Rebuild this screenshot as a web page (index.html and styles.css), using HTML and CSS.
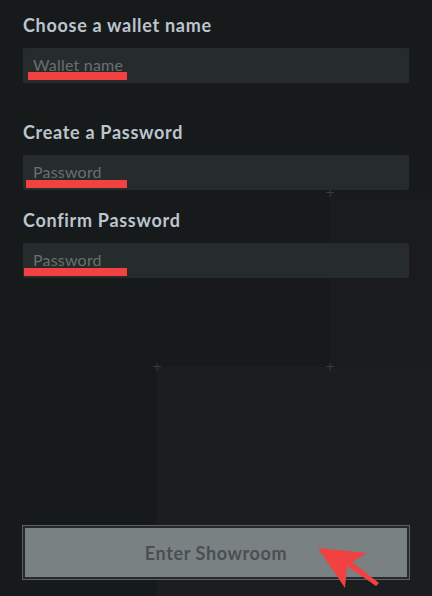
FILE: index.html
```html
<!DOCTYPE html>
<html lang="en">
<head>
    <meta charset="UTF-8">
    <meta name="viewport" content="width=device-width, initial-scale=1.0">
    <title>Create Wallet</title>
    <link rel="stylesheet" href="styles.css">
</head>
<body>

    <div class="backdrop">
        <div class="tile tile-square"></div>
        <div class="tile tile-side"></div>
        <div class="tile tile-bottom"></div>
        <span class="plus plus-tr">+</span>
        <span class="plus plus-bl">+</span>
        <span class="plus plus-br">+</span>
    </div>

    <div class="page">
        <form class="wallet-form" onsubmit="return false">
            <label class="label" for="name">Choose a wallet name</label>
            <div class="field">
                <input type="text" id="name" class="input" placeholder="Wallet name">
                <span class="mark mark-1"></span>
            </div>

            <label class="label label-gap" for="pass">Create a Password</label>
            <div class="field">
                <input type="password" id="pass" class="input" placeholder="Password">
                <span class="mark mark-2"></span>
            </div>

            <label class="label label-near" for="confirm">Confirm Password</label>
            <div class="field">
                <input type="password" id="confirm" class="input" placeholder="Password">
                <span class="mark mark-3"></span>
            </div>
        </form>

        <div class="footer">
            <button class="enter">Enter Showroom</button>
            <svg class="pointer" width="70" height="50" viewBox="0 0 70 50">
                <polygon points="2,3 51,8 36,17 63,38 60,41 31,21 29,43" fill="#f24141"/>
            </svg>
        </div>
    </div>

</body>
</html>
```

FILE: styles.css
```css
* {
    box-sizing: border-box;
}
html, body {
    margin: 0;
    height: 100%;
}
body {
    font-family: Lato, "Open Sans", sans-serif;
    background-color: #171a1b;
    position: relative;
    overflow: hidden;
}

/* faint grid tiles behind the form */
.backdrop {
    position: absolute;
    inset: 0;
    z-index: 0;
}
.tile {
    position: absolute;
}
.tile-square {
    left: 157px;
    top: 193px;
    width: 173px;
    height: 174px;
    background: #18191d;
}
.tile-side {
    left: 330px;
    top: 193px;
    right: 0;
    height: 174px;
    background: #1a1b1d;
}
.tile-bottom {
    left: 157px;
    top: 367px;
    right: 0;
    bottom: 0;
    background: #1c1d1f;
}
.plus {
    position: absolute;
    width: 10px;
    height: 10px;
    margin: -5px 0 0 -5px;
    color: #3a3c40;
    font-size: 12px;
    line-height: 10px;
    text-align: center;
    font-family: "DejaVu Sans", sans-serif;
}
.plus-tr { left: 330px; top: 193px; }
.plus-bl { left: 157px; top: 367px; }
.plus-br { left: 330px; top: 367px; }

.page {
    position: relative;
    z-index: 1;
    height: 100%;
    padding: 15px 23px 0;
    display: flex;
    flex-direction: column;
}
.wallet-form {
    display: flex;
    flex-direction: column;
}
.label {
    display: block;
    font-size: 18px;
    font-weight: bold;
    line-height: 20px;
    color: #bcc5cd;
    margin-bottom: 13px;
    letter-spacing: 0.7px;
}
.label-gap {
    margin-top: 39px;
}
.label-near {
    margin-top: 20px;
}
.field {
    position: relative;
    width: 386px;
}
.input {
    display: block;
    width: 100%;
    height: 35px;
    border: none;
    border-radius: 2px;
    background: #262c2c;
    padding: 0 10px 3px;
    font-family: Lato, "Open Sans", sans-serif;
    font-size: 16px;
    letter-spacing: 0.2px;
    color: #c6ccd0;
    outline: none;
}
.input::placeholder {
    color: #6a6f71;
}
.mark {
    position: absolute;
    height: 8px;
    background: #f24141;
}
.mark-1 { left: 5px; top: 24px; width: 99px; }
.mark-2 { left: 3px; top: 25px; width: 101px; }
.mark-3 { left: 1px; top: 25px; width: 103px; }

.footer {
    position: relative;
    margin-top: auto;
    margin-bottom: 17px;
}
.enter {
    display: block;
    width: 386px;
    height: 53px;
    background: #7a8183;
    border: 2px solid #24292b;
    outline: 1px solid #5b6265;
    border-radius: 0;
    font-family: Lato, "Open Sans", sans-serif;
    font-size: 18px;
    font-weight: bold;
    color: #4a4f52;
    letter-spacing: 0.6px;
    cursor: pointer;
}
.pointer {
    position: absolute;
    left: 293px;
    top: 19px;
}
```
